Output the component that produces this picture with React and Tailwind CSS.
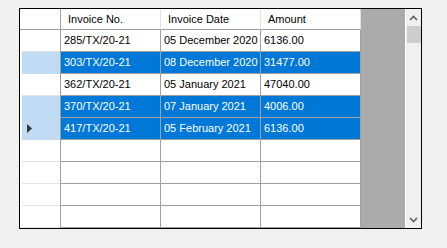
import React from 'react';

const rows = [
    { no: "285/TX/20-21", date: "05 December 2020", amount: "6136.00", selected: false },
    { no: "303/TX/20-21", date: "08 December 2020", amount: "31477.00", selected: true },
    { no: "362/TX/20-21", date: "05 January 2021", amount: "47040.00", selected: false },
    { no: "370/TX/20-21", date: "07 January 2021", amount: "4006.00", selected: true },
    { no: "417/TX/20-21", date: "05 February 2021", amount: "6136.00", selected: true, current: true },
    { no: "", date: "", amount: "" },
    { no: "", date: "", amount: "" },
    { no: "", date: "", amount: "" },
    { no: "", date: "", amount: "" },
];

const Cell = ({ children, selected }) => (
    <div className={`w-[100px] h-full border-r border-b border-[#a0a0a0] pl-[3px] flex items-center whitespace-nowrap overflow-hidden ${selected ? "bg-[#0078d7] text-white" : "bg-white text-black"}`}>
        {children}
    </div>
);

const App = () => {
    return (
        <div className="w-[447px] h-[248px] bg-[#f0f0f0] pt-[8px] pl-[19px]" style={{ fontFamily: '"Liberation Sans", Arial, sans-serif' }}>
            <div className="w-[403px] h-[221px] border border-black flex text-[11px]">
                {/* grid area */}
                <div className="w-[385px] h-full bg-[#ababab] flex flex-col">
                    {/* header */}
                    <div className="flex h-[21px]">
                        <div className="w-[41px] h-full flex border-r border-b border-[#a0a0a0] bg-white"></div>
                        <div className="w-[100px] h-full border-r border-b border-r-[#e3e3e3] border-b-[#a0a0a0] bg-white pl-[7px] flex items-center">Invoice No.</div>
                        <div className="w-[100px] h-full border-r border-b border-r-[#e3e3e3] border-b-[#a0a0a0] bg-white pl-[7px] flex items-center">Invoice Date</div>
                        <div className="w-[100px] h-full border-r border-b border-r-[#e3e3e3] border-b-[#a0a0a0] bg-white pl-[7px] flex items-center">Amount</div>
                    </div>
                    {rows.map((r, i) => (
                        <div key={i} className="flex h-[22px]">
                            <div className="w-[41px] h-full flex border-r border-[#a0a0a0] bg-white">
                                <div className="w-[2px] h-full bg-white"></div>
                                <div className={`flex-1 h-full border-b flex items-center pl-[5px] ${r.selected ? "bg-[#bfdcf4] border-[#bfdcf4]" : "bg-white border-[#e3e3e3]"}`}>
                                    {r.current && (
                                        <svg width="5" height="9" viewBox="0 0 5 9">
                                            <path d="M0 0 L5 4.5 L0 9 Z" fill="#333333" />
                                        </svg>
                                    )}
                                </div>
                            </div>
                            <Cell selected={r.selected}>{r.no}</Cell>
                            <Cell selected={r.selected}>{r.date}</Cell>
                            <Cell selected={r.selected}>{r.amount}</Cell>
                        </div>
                    ))}
                </div>
                {/* vertical scrollbar */}
                <div className="w-[16px] h-full bg-[#f0f0f0] border-l border-[#ffffff] flex flex-col items-center">
                    <div className="h-[17px] w-full flex items-center justify-center">
                        <svg width="9" height="6" viewBox="0 0 9 6">
                            <path d="M1 5 L4.5 1.5 L8 5" stroke="#606060" strokeWidth="1.6" fill="none" />
                        </svg>
                    </div>
                    <div className="w-[14px] h-[17px] bg-[#cdcdcd]"></div>
                    <div className="flex-1"></div>
                    <div className="h-[17px] w-full flex items-center justify-center">
                        <svg width="9" height="6" viewBox="0 0 9 6">
                            <path d="M1 1 L4.5 4.5 L8 1" stroke="#606060" strokeWidth="1.6" fill="none" />
                        </svg>
                    </div>
                </div>
            </div>
        </div>
    );
};

export default App;
